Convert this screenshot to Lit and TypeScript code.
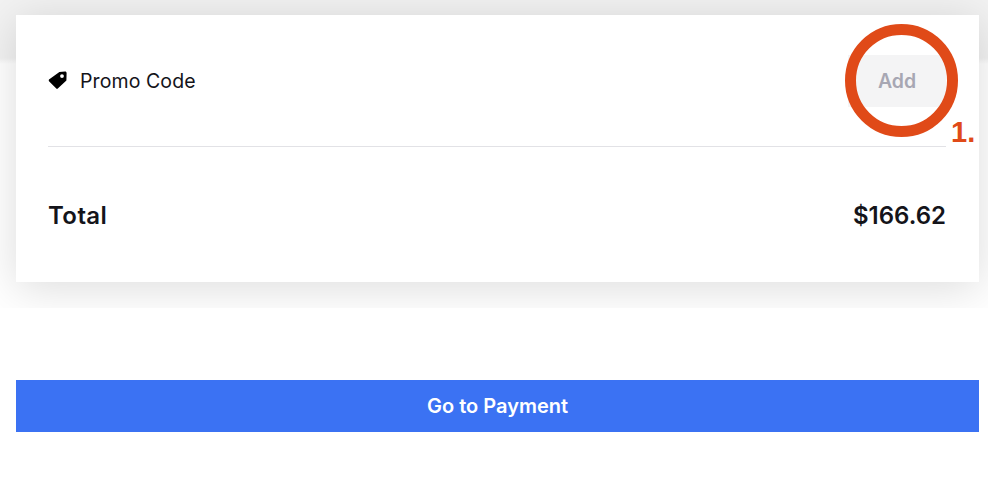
import { LitElement, html, css } from "lit";
import { customElement } from "lit/decorators.js";

@customElement("app-root")
export class AppRoot extends LitElement {
  static styles = css`
    :host {
      display: block;
      width: 988px;
      height: 480px;
      background: #fff;
      font-family: "Inter", "Liberation Sans", sans-serif;
      color: #14141a;
      overflow: hidden;
    }
    .shade {
      height: 308px;
      overflow: hidden;
      padding: 15px 9px 0 16px;
      box-sizing: border-box;
      background: linear-gradient(#f2f2f2 0, #f2f2f2 58px, #ffffff 64px, #ffffff 308px);
    }
    .card {
      position: relative;
      height: 267px;
      background: #fff;
      box-shadow: 0 6px 42px rgba(0, 0, 0, 0.14);
      padding: 40px 33px 0 32px;
      box-sizing: border-box;
    }
    .promo {
      display: flex;
      justify-content: space-between;
      align-items: center;
      padding-bottom: 40px;
      box-sizing: border-box;
      height: 92px;
      border-bottom: 1px solid #e2e2e6;
    }
    .promo-left {
      display: flex;
      align-items: center;
      gap: 13px;
      font-size: 19.5px;
      letter-spacing: 0.1px;
      line-height: 24px;
      padding-top: 1px;
    }
    .tag {
      width: 19px;
      height: 18px;
      display: block;
      margin-top: -3px;
    }
    .add {
      width: 98px;
      height: 52px;
      display: flex;
      align-items: center;
      justify-content: center;
      background: #f4f4f5;
      color: #a7a7b3;
      font-size: 19.5px;
      font-weight: 600;
      padding-top: 1px;
      box-sizing: border-box;
    }
    .total {
      display: flex;
      justify-content: space-between;
      align-items: center;
      margin-top: 54px;
      font-size: 24px;
      font-weight: 600;
      line-height: 30px;
    }
    .total-label {
      letter-spacing: 0.4px;
    }
    .ring {
      position: absolute;
      left: 829px;
      top: 9px;
      width: 113px;
      height: 113px;
      box-sizing: border-box;
      border: 11px solid #e04a18;
      border-radius: 50%;
    }
    .note {
      position: absolute;
      left: 935px;
      top: 100px;
      color: #e04a18;
      font-family: "Liberation Sans", sans-serif;
      font-size: 29px;
      font-weight: 700;
      line-height: 34px;
    }
    .actions {
      padding: 72px 9px 0 16px;
    }
    .pay {
      height: 52px;
      display: flex;
      align-items: center;
      justify-content: center;
      background: #3b72f3;
      color: #fff;
      font-size: 20px;
      font-weight: 600;
    }
  `;

  render() {
    return html`
      <div class="shade">
        <div class="card">
          <div class="promo">
            <div class="promo-left">
              <svg class="tag" viewBox="0 0 19 18">
                <path
                  fill="#000"
                  fill-rule="evenodd"
                  d="M1 8.6 11.4 1 17 0.4c1 0 1.6 .6 1.6 1.5L18.4 9.4 9.8 17.6c-.5.4-1.1.4-1.5 0L1 10.2c-.4-.5-.4-1.2 0-1.6ZM14 3.2a1.9 1.9 0 1 0 0 3.8 1.9 1.9 0 0 0 0-3.8Z"
                />
              </svg>
              <span>Promo Code</span>
            </div>
            <div class="add">Add</div>
          </div>
          <div class="total"><span class="total-label">Total</span><span>$166.62</span></div>
          <div class="ring"></div>
          <div class="note">1.</div>
        </div>
      </div>
      <div class="actions"><div class="pay">Go to Payment</div></div>
    `;
  }
}
